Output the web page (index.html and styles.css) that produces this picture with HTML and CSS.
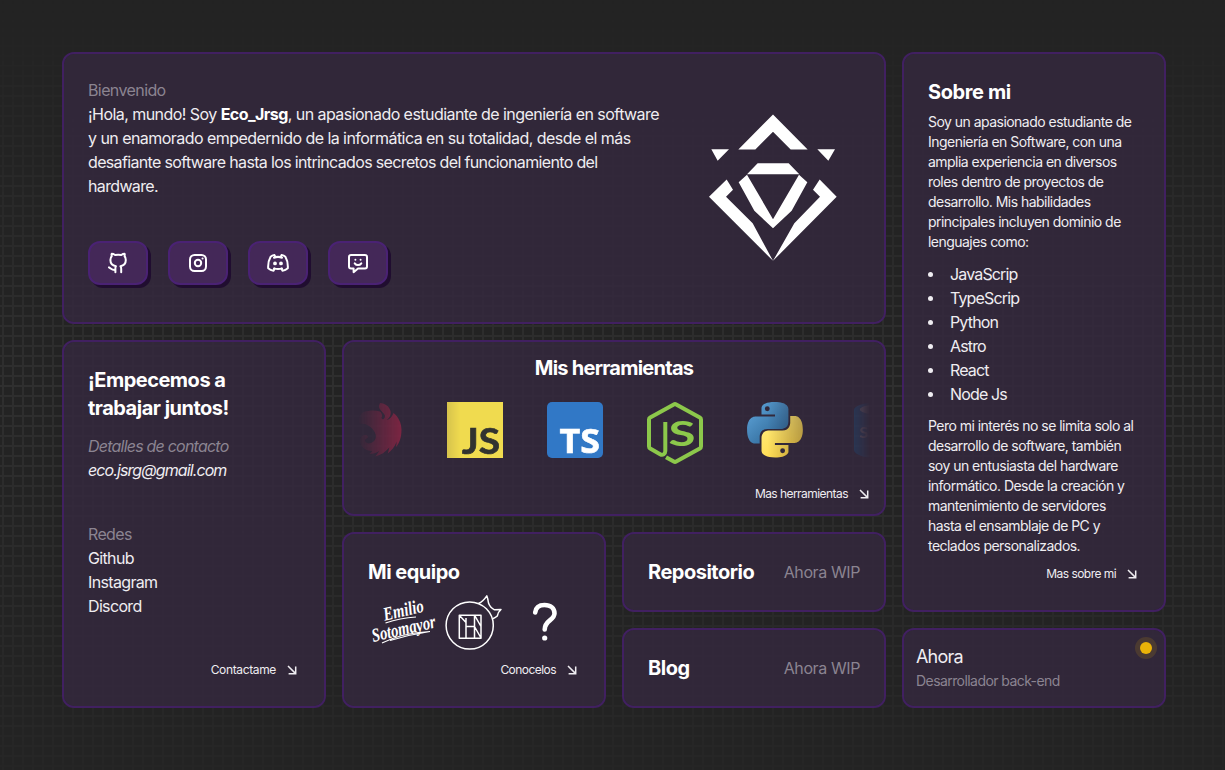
FILE: index.html
```html
<!DOCTYPE html>
<html lang="es">
<head>
<meta charset="utf-8">
<title>Eco_Jrsg</title>
<link rel="stylesheet" href="styles.css">
</head>
<body>
<svg class="defs" aria-hidden="true">
  <symbol id="arrow" viewBox="0 0 10 10"><path d="M1 1l7.400 7.400M1.600 8.700h7.100V1.600" fill="none" stroke="currentColor" stroke-width="1.500"/></symbol>
</svg>
<main class="bento">
  <section class="card hero">
    <div class="hero-copy">
      <p class="muted welcome">Bienvenido</p>
      <p class="intro">¡Hola, mundo! Soy <strong>Eco_Jrsg</strong>, un apasionado estudiante de ingeniería en software<br>y un enamorado empedernido de la informática en su totalidad, desde el más<br><span class="tight">desafiante software hasta los intrincados secretos del funcionamiento del<br>hardware.</span></p>
      <nav class="socials">
        <a class="social"><svg viewBox="0 0 24 24"><path d="M9.400 21.300v-3.300M9.400 18.900C6 19.400 5.200 17.600 3 16.400M15.200 21.300v-3.600c0-1.200-.2-1.800-.7-2.400 3.300-.6 5.300-2.600 5.300-6.200 0-1.600-.4-3-1.300-4.100.3-.9.300-1.700.1-2.200-1.300 0-2.500.6-3.300 1.200-2-.4-4.200-.4-6.200 0C8.200 3.400 7 2.800 5.700 2.800c-.2.500-.2 1.300.1 2.200-.9 1.100-1.400 2.500-1.400 4.100 0 3.600 2.200 5.600 5.500 6.200-.5.600-.6 1.400-.5 2.700"/></svg></a>
        <a class="social"><svg viewBox="0 0 24 24"><rect x="4" y="4" width="16" height="16" rx="4.500"/><circle cx="12" cy="12" r="3.200"/><path d="M16.500 7.500h.1"/></svg></a>
        <a class="social"><svg viewBox="0 0 24 24"><path d="M8 17.400c2.600.8 5.400.8 8 0M8 6.700c2.600-.8 5.400-.8 8 0M15.400 17.500l1 2.200c2-.4 3.900-1.200 5.400-2.500.3-4.600-.6-8.400-2.400-11.500-1.200-.9-2.500-1.300-3.900-1.600l-.8 1.800c-1.800-.3-3.600-.3-5.400 0l-.8-1.800c-1.400.3-2.700.7-3.900 1.600-1.800 3.100-2.700 6.900-2.400 11.500 1.500 1.300 3.400 2.100 5.400 2.500l1-2.200"/><circle cx="9" cy="12.400" r=".9"/><circle cx="15" cy="12.400" r=".9"/></svg></a>
        <a class="social"><svg viewBox="0 0 24 24"><path d="M5 4h14a2 2 0 0 1 2 2v9.500a2 2 0 0 1-2 2h-7l-4.400 3.700v-3.700H5a2 2 0 0 1-2-2V6a2 2 0 0 1 2-2zM9.400 8.700v.1M14.600 8.700v.1M8.700 12.300c1.700 2.400 4.900 2.400 6.600 0"/></svg></a>
      </nav>
    </div>
    <svg class="logo" viewBox="57 43 384 440" fill="#fff"><path d="M249 44L353 149H302L249 96L196 149H145zM64 148H117L83 183zM382 148H435L415 183zM203 190H296L328 223H171zM171 225L249 358L327 225L352 247L305 333L249 385L193 333L146 247zM110 239L129 270L108 291L188 370L249 483L57 291zM389 239L440 291L249 483L313 370L390 291L369 270z"/></svg>
  </section>

  <section class="card about">
    <h2 class="wide">Sobre mi</h2>
    <p class="small">Soy un apasionado estudiante de<br>Ingeniería en Software, con una<br>amplia experiencia en diversos<br>roles dentro de proyectos de<br>desarrollo. Mis habilidades<br>principales incluyen dominio de<br>lenguajes como:</p>
    <ul class="langs"><li>JavaScrip</li><li>TypeScrip</li><li>Python</li><li>Astro</li><li>React</li><li>Node Js</li></ul>
    <p class="small">Pero mi interés no se limita solo al<br>desarrollo de software, también<br>soy un entusiasta del hardware<br>informático. Desde la creación y<br>mantenimiento de servidores<br>hasta el ensamblaje de PC y<br>teclados personalizados.</p>
    <a class="more">Mas sobre mi<svg><use href="#arrow"/></svg></a>
  </section>

  <section class="card contact">
    <h2>¡Empecemos a<br>trabajar juntos!</h2>
    <address><span class="muted">Detalles de contacto</span><br><span class="mail">eco.jsrg@gmail.com</span></address>
    <ul class="nets"><li class="muted">Redes</li><li>Github</li><li>Instagram</li><li>Discord</li></ul>
    <a class="more">Contactame<svg><use href="#arrow"/></svg></a>
  </section>

  <section class="card tools">
    <h2>Mis herramientas</h2>
    <div class="marquee">
      <svg viewBox="0 0 56 64"><path fill="#e0234e" d="M33 1c5 .5 9.500 3.500 10.500 8 .8 4-1 7.500-5 9.500-1.500.6-3 .6-4.500.2 2.500-1 4-2.700 4-5-1-3-4.500-4.500-5.500-7.200-.8-1.800-.5-3.500.5-5.500zM46.500 11c5 4 8 10 8 17 0 7-2 13-5.500 17l.8-5.500c-2 5-5 9-9 12l1.500-6c-4 4.500-8 7.500-14 9l4-5.500c-3 2-6 3-10 3l3-3C18 49 13 44 13 39c0-4 2.500-6.500 6-6 1.500.3 2 1.500 1.500 3-2.500.5-3 2.500-2 4 1.500 2 5 2 8-.5 3.500-3 3-8-1-12.500-3.500-4-8-6-13-5-1.500-4-.5-10 4-12 6-2 12-2 16.500-.5 2 1.500 2.500 4 1.500 6.500 2 3.500 9 3 12-5z"/></svg>
      <svg viewBox="0 0 56 64"><path fill="#f0db4f" d="M0 0h56v56H0z"/><text x="15" y="51.500" textLength="38" lengthAdjust="spacingAndGlyphs" class="js">JS</text></svg>
      <svg viewBox="0 0 56 64"><rect width="56" height="56" rx="5" fill="#3178c6"/><text x="12.500" y="50.700" textLength="40.500" lengthAdjust="spacingAndGlyphs" class="ts">TS</text></svg>
      <svg viewBox="0 0 56 64"><path d="M18.300 20v29c0 3.200-2.600 4.700-5.200 3.200L3.200 46.500Q2 45.800 2 44.500V17.500Q2 16.200 3.200 15.500L26.800 2.400Q28 1.700 29.200 2.400L52.800 15.500Q54 16.200 54 17.500V44.500Q54 45.800 52.800 46.500L29.200 59.600Q28 60.300 26.800 59.600L19 55.200" fill="none" stroke="#8cc84b" stroke-width="4"/><text x="21.500" y="43.800" textLength="27" lengthAdjust="spacingAndGlyphs" class="njs">S</text></svg>
      <svg viewBox="0 0 256 293"><defs><linearGradient id="py1" x1=".13" y1=".12" x2=".8" y2=".82"><stop stop-color="#5a9fd4"/><stop offset="1" stop-color="#306998"/></linearGradient><linearGradient id="py2" x1=".19" y1=".2" x2=".9" y2=".88"><stop stop-color="#ffe873"/><stop offset="1" stop-color="#ffd43b"/></linearGradient></defs><path fill="url(#py1)" d="M126.916.072c-64.832 0-60.784 28.115-60.784 28.115l.072 29.128h61.868v8.745H41.631S.145 61.355.145 126.770c0 65.417 36.210 63.097 36.210 63.097h21.610v-30.356s-1.165-36.210 35.632-36.210h61.362s34.475.557 34.475-33.319V33.970S194.670.072 126.916.072zM92.802 19.660a11.120 11.120 0 0 1 11.130 11.130 11.120 11.120 0 0 1-11.130 11.130 11.120 11.120 0 0 1-11.130-11.130 11.120 11.120 0 0 1 11.130-11.130z"/><path fill="url(#py2)" d="M128.757 254.126c64.832 0 60.784-28.115 60.784-28.115l-.072-29.127H127.600v-8.745h86.441s41.486 4.705 41.486-60.712c0-65.416-36.210-63.096-36.210-63.096h-21.610v30.355s1.165 36.210-35.632 36.210h-61.362s-34.475-.557-34.475 33.320v56.013s-5.235 33.897 62.518 33.897zm34.114-19.586a11.120 11.120 0 0 1-11.130-11.130 11.120 11.120 0 0 1 11.130-11.131 11.120 11.120 0 0 1 11.130 11.130 11.120 11.120 0 0 1-11.130 11.130z"/></svg>
      <svg viewBox="0 0 56 64"><path fill="#0080d8" d="M7 8v40c0 4 9 8 21 8s21-4 21-8V8z"/><ellipse cx="28" cy="8" rx="21" ry="7.500" fill="#0080d8"/><ellipse cx="28" cy="7.500" rx="15" ry="4.500" fill="#fff"/><text x="12.500" y="36" class="sql">S</text></svg>
    </div>
    <a class="more">Mas herramientas<svg><use href="#arrow"/></svg></a>
  </section>

  <section class="card team">
    <h2>Mi equipo</h2>
    <div class="members">
      <svg class="emilio" viewBox="0 0 68 56"><g transform="rotate(-13 34 28)"><text x="16" y="20.500" textLength="41" lengthAdjust="spacingAndGlyphs">Emilio</text><text x="0" y="38.500" textLength="65" lengthAdjust="spacingAndGlyphs">Sotomayor</text></g><path d="M15.500 27Q30 22 46 21M12 47Q32 37 60 35.500Q40 38.500 20 44.500" fill="none" stroke="#fff" stroke-width="1.200"/></svg>
      <svg class="cat" viewBox="0 0 58 56" fill="none" stroke="#fff" stroke-width="1.500"><circle cx="24.700" cy="31.500" r="23.600"/><path d="M33.500 9.500Q38 7.500 41.800 1.800Q43 5 43.500 9Q45 13.500 49.500 15.800L56 15.500Q53 18 52.300 22Q50 24 47.700 24.800M14.300 21.200h21.700v23H14.300zM21 24v20M29.500 21v23M21 32.500h8.500M14.300 21.200l6.700 7.300M29.500 21.200L36 32.500M29.500 32.500L36 44" stroke-linejoin="round"/></svg>
      <svg class="quest" viewBox="0 0 26 40"><path d="M3.200 10.500C3.800 5.500 7.300 3 12.500 3 18.500 3 22.500 6.300 22.500 11.300 22.500 18.500 12.700 18 12.700 27.500" fill="none" stroke="#fff" stroke-width="4.600" stroke-linecap="round"/><circle cx="12.700" cy="36" r="2.600" fill="#fff"/></svg>
    </div>
    <a class="more">Conocelos<svg><use href="#arrow"/></svg></a>
  </section>

  <section class="card wip"><h2>Repositorio</h2><span class="muted">Ahora WIP</span></section>
  <section class="card wip"><h2>Blog</h2><span class="muted">Ahora WIP</span></section>

  <section class="card now">
    <h3>Ahora</h3>
    <p>Desarrollador back-end</p>
    <span class="status"></span>
  </section>
</main>
</body>
</html>
```
FILE: styles.css
```css
* { box-sizing: border-box; margin: 0; padding: 0; }

body {
  position: relative;
  height: 770px;
  overflow: hidden;
  background: #232323;
  color: #efedf1;
  font: 16px/24px Inter, sans-serif;
  white-space: nowrap;
}

/* Grid backdrop, fading out towards the top and bottom */
body::before {
  content: "";
  position: absolute;
  inset: 0;
  z-index: -1;
  background-image:
    linear-gradient(to right, transparent 2px, #2f2f2f 2px, #2f2f2f 4px, transparent 4px),
    linear-gradient(to bottom, transparent 5px, #2f2f2f 5px, #2f2f2f 7px, transparent 7px);
  background-size: 10px 10px;
  mask-image: linear-gradient(transparent 0, #000 50%, rgba(0, 0, 0, .25) 100%);
}

.defs { position: absolute; width: 0; height: 0; }

.bento {
  display: grid;
  grid-template-columns: repeat(4, 264px);
  grid-template-rows: repeat(7, 80px);
  gap: 16px;
  padding: 52px 0 0 62px;
}

.card {
  min-width: 0;
  border: 2px solid #412061;
  border-radius: 12px;
  background: rgba(52, 40, 62, .82);
  background-clip: padding-box;
  padding: 24px;
  display: flex;
  flex-direction: column;
}

h2 { font-size: 20px; line-height: 28px; font-weight: 700; letter-spacing: -.5px; color: #fff; }
h2.wide { letter-spacing: -.4px; }
strong { color: #fff; }
.muted { color: #8b8491; }

.hero { grid-column: 1 / 4; grid-row: 1 / 4; flex-direction: row; justify-content: space-between; }
.hero-copy { display: flex; flex-direction: column; }
.welcome { letter-spacing: -.6px; }
.intro { letter-spacing: -.55px; }
.intro .tight { letter-spacing: -.65px; }
.socials { display: flex; gap: 20px; margin-top: 43px; }
.social {
  width: 60px;
  height: 44px;
  border: 2px solid #4a2274;
  border-radius: 12px;
  background: #442858;
  box-shadow: 3px 3px 0 #200d30;
  display: grid;
  place-items: center;
}
.social svg { width: 24px; height: 24px; fill: none; stroke: #fff; stroke-width: 2; stroke-linecap: round; stroke-linejoin: round; }
.logo { width: 128px; height: 147px; margin: 36px 23px 0 0; }

.about { grid-column: 4; grid-row: 1 / 7; }
.small { font-size: 14px; line-height: 20px; letter-spacing: -.53px; margin-top: 8px; }
.about h2 + .small { margin-top: 6px; }
.langs { list-style: none; margin: 10px 0 2px; letter-spacing: -.85px; }
.langs li { display: flex; align-items: center; gap: 17px; }
.langs li::before { content: ""; width: 5px; height: 5px; border-radius: 50%; background: #efedf1; }

.contact { grid-column: 1; grid-row: 4 / 8; }
address { margin-top: 12px; letter-spacing: -.78px; }
.mail { letter-spacing: -.9px; }
.nets { list-style: none; margin-top: 40px; letter-spacing: -.65px; }

.more {
  margin-top: auto;
  margin-bottom: 4px;
  align-self: flex-end;
  display: flex;
  align-items: center;
  gap: 11px;
  font-size: 12px;
  line-height: 16px;
  letter-spacing: -.55px;
}
.more svg { width: 10px; height: 10px; margin-right: 3px; }
.contact .more { letter-spacing: -.35px; }

.tools { grid-column: 2 / 4; grid-row: 4 / 6; padding: 12px 14px; }
.tools h2 { text-align: center; letter-spacing: -.75px; }
.marquee {
  display: flex;
  gap: 44px;
  height: 64px;
  margin-top: 20px;
  overflow: hidden;
  mask-image: linear-gradient(to right, transparent, #000 20%, #000 80%, transparent);
}
.marquee svg { flex: none; width: 56px; height: 64px; }
.marquee svg:first-child { margin-left: -11px; }
.tools .more { margin-bottom: 0; }
.tools .more svg { margin-right: 1px; }
.js, .ts, .njs, .sql { font-family: Lato, sans-serif; font-weight: 700; }
.js { font-size: 36px; fill: #323330; stroke: #323330; stroke-width: .7; }
.ts { font-family: "Open Sans", sans-serif; font-size: 34px; fill: #fff; stroke: #fff; stroke-width: .6; }
.njs { font-size: 35px; fill: #8cc84b; }
.sql { font-size: 16px; fill: #fff; }

.team { grid-column: 2; grid-row: 6 / 8; }
.members { display: flex; align-items: flex-start; margin-top: 8px; }
.emilio { width: 68px; height: 56px; margin: 2px 0 0 2px; overflow: visible; }
.emilio text { font: italic 700 19px "Liberation Serif", serif; fill: #fff; }
.cat { width: 58px; height: 56px; margin-left: 7px; }
.quest { width: 26px; height: 40px; margin: 8px 0 0 29px; }

.wip { flex-direction: row; align-items: center; justify-content: space-between; letter-spacing: -.4px; }

.now { position: relative; padding: 13px 12px; }
.now h3 { font-size: 18px; line-height: 28px; font-weight: 400; letter-spacing: -.8px; }
.now p { font-size: 14px; line-height: 20px; color: #8b8491; letter-spacing: -.57px; }
.status {
  position: absolute;
  top: 12px;
  right: 12px;
  width: 12px;
  height: 12px;
  border-radius: 50%;
  background: #eab308;
  box-shadow: 0 0 0 5px rgba(234, 179, 8, .14);
}
```
